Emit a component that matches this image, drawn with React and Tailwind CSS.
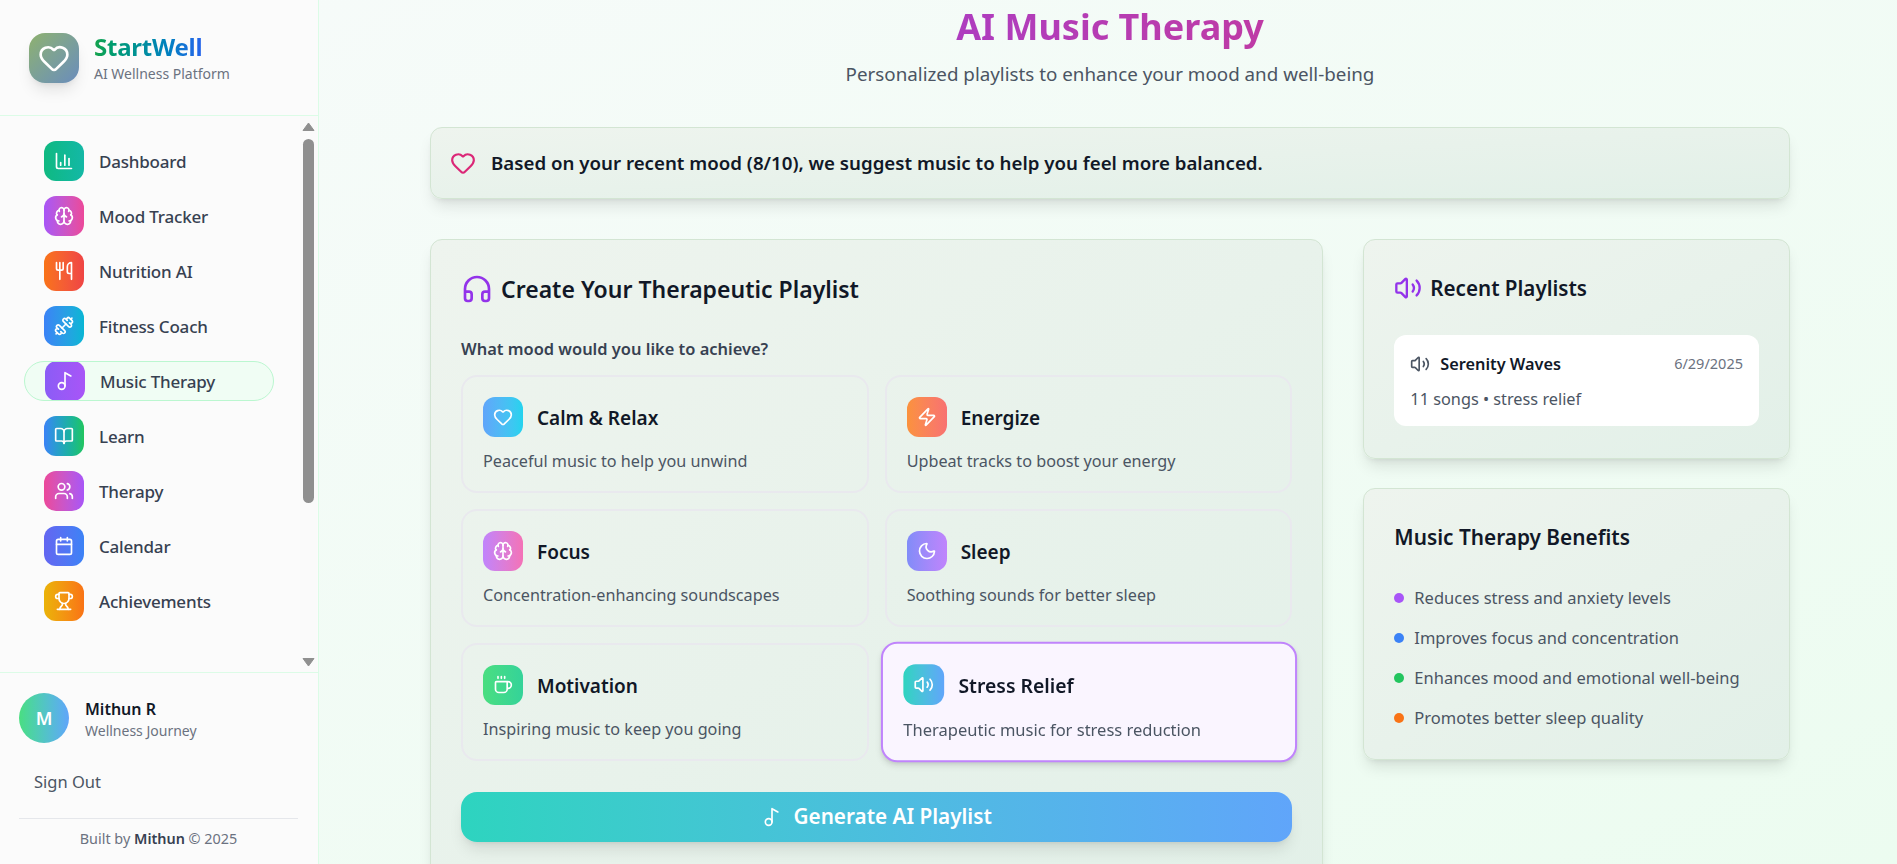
import React from "react";
import { BarChart3, Brain, Utensils, Dumbbell, Music2, BookOpen, Users, Calendar, Trophy, Heart, Headphones, Volume2, Zap, Moon, Coffee } from "lucide-react";

const nav = [
  ["Dashboard", BarChart3, "bg-gradient-to-r from-[#10b981] to-[#14b8a6]"],
  ["Mood Tracker", Brain, "bg-gradient-to-r from-[#a855f7] to-[#ec4899]"],
  ["Nutrition AI", Utensils, "bg-gradient-to-r from-[#f97316] to-[#ef4444]"],
  ["Fitness Coach", Dumbbell, "bg-gradient-to-r from-[#3b82f6] to-[#06b6d4]"],
  ["Music Therapy", Music2, "bg-gradient-to-r from-[#8b5cf6] to-[#a855f7]", true],
  ["Learn", BookOpen, "bg-gradient-to-r from-[#3b82f6] to-[#22c55e]"],
  ["Therapy", Users, "bg-gradient-to-r from-[#ec4899] to-[#a855f7]"],
  ["Calendar", Calendar, "bg-gradient-to-r from-[#6366f1] to-[#3b82f6]"],
  ["Achievements", Trophy, "bg-gradient-to-r from-[#eab308] to-[#f97316]"],
];

const moods = [
  ["Calm & Relax", "Peaceful music to help you unwind", Heart, "bg-gradient-to-r from-[#60a5fa] to-[#22d3ee]"],
  ["Energize", "Upbeat tracks to boost your energy", Zap, "bg-gradient-to-r from-[#fb923c] to-[#f87171]"],
  ["Focus", "Concentration-enhancing soundscapes", Brain, "bg-gradient-to-r from-[#c084fc] to-[#f472b6]"],
  ["Sleep", "Soothing sounds for better sleep", Moon, "bg-gradient-to-r from-[#818cf8] to-[#c084fc]"],
  ["Motivation", "Inspiring music to keep you going", Coffee, "bg-gradient-to-r from-[#4ade80] to-[#34d399]"],
  ["Stress Relief", "Therapeutic music for stress reduction", Volume2, "bg-gradient-to-r from-[#2dd4bf] to-[#60a5fa]", true],
];

const benefits = [
  ["Reduces stress and anxiety levels", "bg-[#a855f7]"],
  ["Improves focus and concentration", "bg-[#3b82f6]"],
  ["Enhances mood and emotional well-being", "bg-[#22c55e]"],
  ["Promotes better sleep quality", "bg-[#f97316]"],
];

const glass = "border border-[#d3e5d3] bg-gradient-to-br from-[#eef4ee] to-[#e2f0e8] shadow-[0_10px_15px_-3px_rgba(0,0,0,0.1),0_4px_6px_-4px_rgba(0,0,0,0.1)]";

function Sidebar() {
  return (
    <aside className="flex h-[864px] w-[319px] shrink-0 flex-col border-r border-[#dcfce7] bg-[#fbfbfb]">
      <div className="flex h-[116px] shrink-0 items-center gap-[15px] border-b border-[#dcfce7] pl-[29px]">
        <div className="flex h-[50px] w-[50px] items-center justify-center rounded-2xl bg-gradient-to-br from-[#8fb16c] to-[#6b8cbb] shadow-lg">
          <Heart size={32} className="text-white" strokeWidth={2} />
        </div>
        <div>
          <div className="w-fit bg-gradient-to-r from-[#16a34a] to-[#2563eb] bg-clip-text text-[24px] font-bold leading-[32px] tracking-[-0.01em] text-transparent">StartWell</div>
          <div className="mt-[1px] text-[14px] leading-[20px] text-[#6b7280]">AI Wellness Platform</div>
        </div>
      </div>
      <div className="flex h-[556px] shrink-0">
        <nav className="flex w-[300px] flex-col gap-[15px] pl-6 pt-[25px]">
          {nav.map(([label, Icon, grad, active]) => (
            <div key={label} className={active
              ? "flex h-10 w-[250px] shrink-0 items-center gap-[15px] overflow-hidden rounded-[20px] border border-[#bbf7d0] bg-[#f0fdf4] pl-5 text-[17px] font-medium tracking-[-0.2px] text-[#374151]"
              : "flex h-10 w-[250px] shrink-0 items-center gap-[15px] pl-5 text-[17px] font-medium tracking-[-0.2px] text-[#374151]"}>
              <div className={`flex h-10 w-10 shrink-0 items-center justify-center rounded-xl ${grad}`}>
                <Icon size={20} className="text-white" strokeWidth={2} />
              </div>
              <span className="pt-[2px]">{label}</span>
            </div>
          ))}
        </nav>
        <div className="flex w-[17px] flex-col items-center bg-[#fafafa] pt-[6px] pb-[5px]">
          <svg width="13" height="10" viewBox="0 0 13 10"><path d="M6.5 1 L12 8.5 L1 8.5 Z" fill="#8f8f8f" stroke="#8f8f8f" strokeLinejoin="round" /></svg>
          <div className="mt-[7px] h-[364px] w-[11px] rounded-[6px] bg-[#8f8f8f]" />
          <div className="flex-1" />
          <svg width="13" height="10" viewBox="0 0 13 10"><path d="M6.5 9 L12 1.5 L1 1.5 Z" fill="#8f8f8f" stroke="#8f8f8f" strokeLinejoin="round" /></svg>
        </div>
      </div>
      <div className="flex-1 border-t border-[#dcfce7] pl-[19px] pr-[20px] pt-5">
        <div className="flex items-center gap-4">
          <div className="flex h-[50px] w-[50px] items-center justify-center rounded-full bg-gradient-to-r from-[#4ade80] to-[#60a5fa] text-[18px] font-semibold text-white">M</div>
          <div className="pt-[2px]">
            <div className="text-[16px] font-semibold leading-[24px] text-[#111827]">Mithun R</div>
            <div className="text-[14px] leading-[20px] text-[#6b7280]">Wellness Journey</div>
          </div>
        </div>
        <div className="mt-[27px] pl-[15px] text-[16.5px] leading-[24px] text-[#4b5563]">Sign Out</div>
        <div className="mt-[24px] border-t border-[#e5e7eb] pt-[10px] text-center text-[14.4px] leading-[20px] text-[#6b7280]">
          Built by <span className="font-semibold text-[#374151]">Mithun</span> © 2025
        </div>
      </div>
    </aside>
  );
}

function MoodCard({ title, desc, Icon, grad, selected }) {
  return (
    <div className={selected
      ? "h-[118px] scale-[1.02] rounded-2xl border-2 border-[#c084fc] bg-[#faf5ff] p-5 shadow-md"
      : "h-[118px] rounded-2xl border-2 border-[#e9e9ee] p-5"}>
      <div className="flex items-center gap-[14px]">
        <div className={`flex h-10 w-10 shrink-0 items-center justify-center rounded-xl ${grad}`}>
          <Icon size={20} className="text-white" strokeWidth={2} />
        </div>
        <div className="pt-[2px] text-[19px] font-semibold text-[#111827]">{title}</div>
      </div>
      <div className="mt-3 text-[16.2px] leading-[24px] text-[#4b5563]">{desc}</div>
    </div>
  );
}

export default function App() {
  return (
    <div className="flex h-[864px] w-[1897px] overflow-hidden bg-gradient-to-br from-[#f7fbfa] to-[#ecfcf0] font-['Noto_Sans','Open_Sans',sans-serif]">
      <Sidebar />
      <main className="min-w-0 flex-1 overflow-hidden pl-[111px] pr-[107px]">
        <h1 className="mt-[3px] bg-gradient-to-r from-[#9333ea] to-[#db2777] bg-clip-text text-center text-[36px] font-bold leading-[48px] text-transparent">AI Music Therapy</h1>
        <p className="mt-[9px] text-center text-[18.8px] leading-[28px] text-[#4b5563]">Personalized playlists to enhance your mood and well-being</p>
        <div className={`mt-[39px] flex h-[72px] items-center gap-[15px] rounded-xl px-[19px] ${glass}`}>
          <Heart size={26} className="text-[#db2777]" strokeWidth={2} />
          <span className="text-[18.7px] font-semibold text-[#111827]">Based on your recent mood (8/10), we suggest music to help you feel more balanced.</span>
        </div>
        <div className="mt-10 grid grid-cols-3 gap-10">
          <section className={`col-span-2 rounded-xl p-[30px] pt-[33px] ${glass}`}>
            <div className="flex items-center gap-2">
              <Headphones size={32} className="text-[#9333ea]" strokeWidth={2} />
              <h2 className="text-[23px] font-semibold leading-[32px] text-[#111827]">Create Your Therapeutic Playlist</h2>
            </div>
            <div className="mt-[32px] text-[16.45px] font-semibold leading-[24px] text-[#374151]">What mood would you like to achieve?</div>
            <div className="mt-[14px] grid grid-cols-2 gap-4">
              {moods.map(([t, d, I, g, s]) => <MoodCard key={t} title={t} desc={d} Icon={I} grad={g} selected={s} />)}
            </div>
            <div className="mt-[31px] flex h-[50px] items-center justify-center gap-3 rounded-2xl bg-gradient-to-r from-[#2dd4bf] to-[#60a5fa] text-[20.7px] font-semibold text-white shadow-lg">
              <Music2 size={20} /> <span>Generate AI Playlist</span>
            </div>
            <div className="h-[60px]" />
          </section>
          <div className="flex flex-col gap-[29px] self-start">
            <section className={`h-[220px] rounded-xl p-[30px] pt-[34px] ${glass}`}>
              <div className="flex items-center gap-2">
                <Volume2 size={28} className="text-[#9333ea]" />
                <h3 className="text-[20.6px] font-semibold leading-[28px] text-[#111827]">Recent Playlists</h3>
              </div>
              <div className="mt-[33px] h-[91px] rounded-xl bg-white px-4 pt-[17px]">
                <div className="flex items-center justify-between">
                  <div className="flex items-center gap-[10px]">
                    <Volume2 size={20} className="text-[#4b5563]" />
                    <span className="text-[16.3px] font-semibold text-[#111827]">Serenity Waves</span>
                  </div>
                  <span className="text-[14.5px] text-[#6b7280]">6/29/2025</span>
                </div>
                <div className="mt-[11px] text-[16.3px] text-[#4b5563]">11 songs • stress relief</div>
              </div>
            </section>
            <section className={`h-[272px] rounded-xl p-[30px] pt-[34px] ${glass}`}>
              <h3 className="text-[20.8px] font-semibold leading-[28px] text-[#111827]">Music Therapy Benefits</h3>
              <ul className="mt-[35px] flex flex-col gap-[16px]">
                {benefits.map(([t, c]) => (
                  <li key={t} className="flex items-center gap-[10px] text-[16.5px] leading-[24px] text-[#4b5563]">
                    <span className={`h-[10px] w-[10px] rounded-full ${c}`} />{t}
                  </li>
                ))}
              </ul>
            </section>
          </div>
        </div>
      </main>
    </div>
  );
}
